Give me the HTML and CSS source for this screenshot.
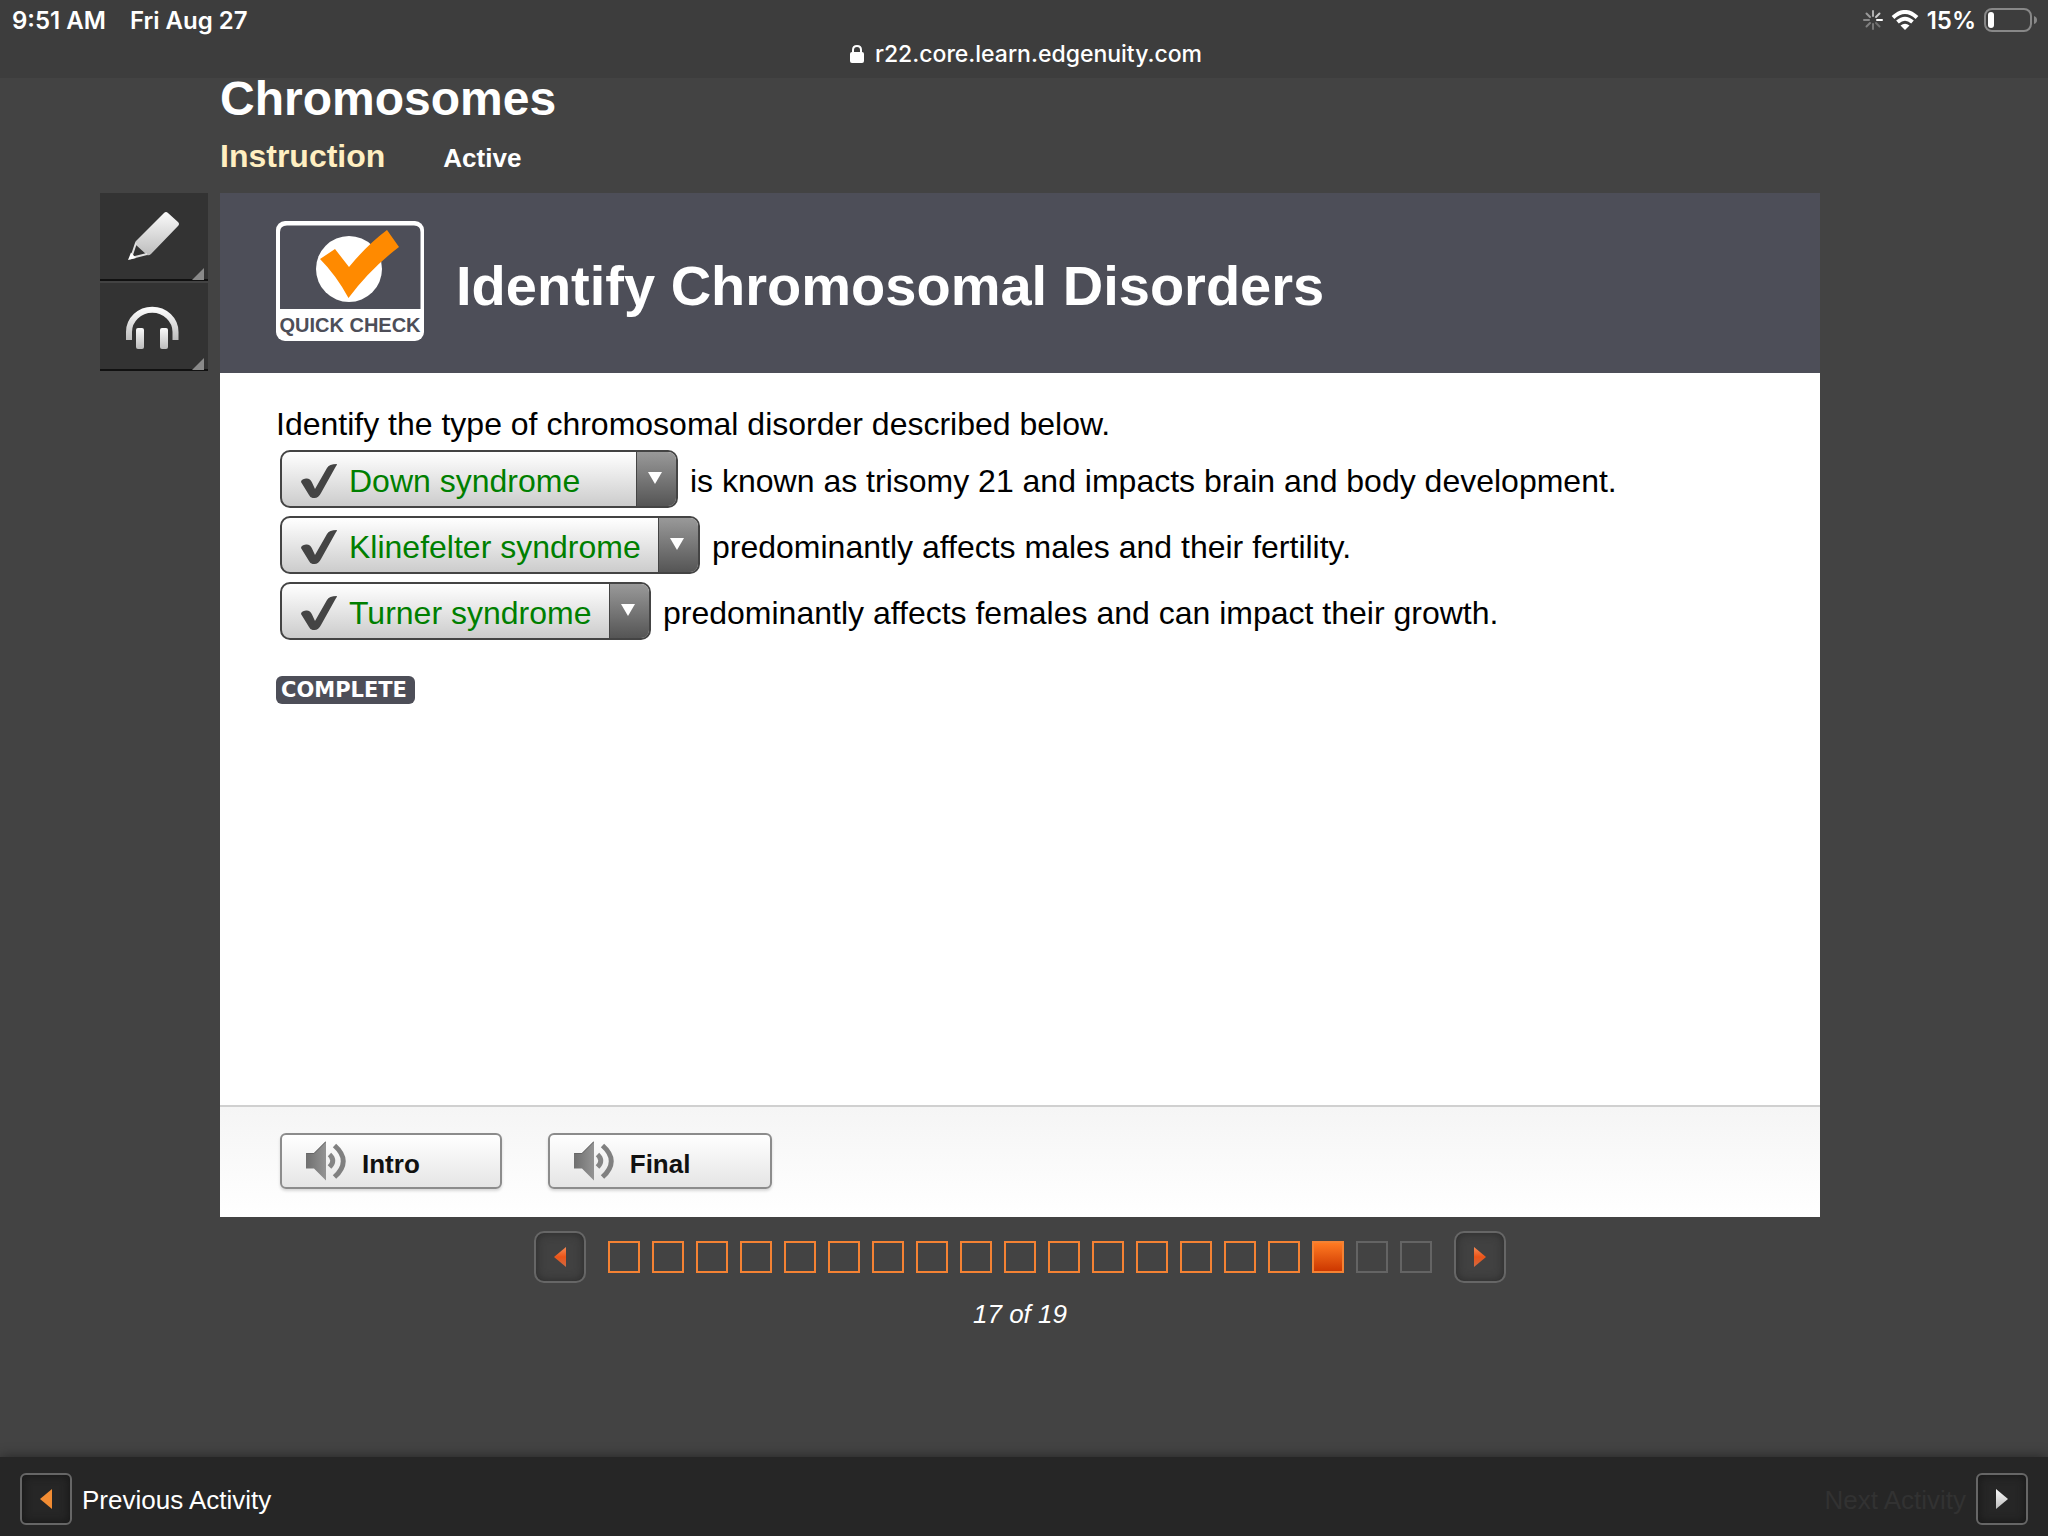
FILE: index.html
```html
<!DOCTYPE html>
<html lang="en">
<head>
    <meta charset="UTF-8">
    <title>Chromosomes</title>
    <link rel="stylesheet" href="styles.css">
</head>
<body>
    <!-- shared icon shapes -->
    <svg class="defs" width="0" height="0" aria-hidden="true">
        <defs>
            <linearGradient id="silver" x1="0" y1="0" x2="0" y2="1">
                <stop offset="0" stop-color="#fafafa"/>
                <stop offset="1" stop-color="#bdbdbd"/>
            </linearGradient>
            <linearGradient id="orange" x1="0" y1="0" x2="0" y2="1">
                <stop offset="0" stop-color="#f58a55"/>
                <stop offset="0.5" stop-color="#ea5418"/>
                <stop offset="1" stop-color="#cf6a45"/>
            </linearGradient>
            <linearGradient id="speakerFill" x1="0" y1="0" x2="1" y2="0">
                <stop offset="0" stop-color="#6f6f6f"/>
                <stop offset="1" stop-color="#949494"/>
            </linearGradient>
            <symbol id="check" viewBox="0 0 36 34">
                <path d="M0 18 Q0 15 5 14.500 Q9 14 11 18.500 L14 25 L26 4 Q28 0 36 0 Q36 1 34.500 3 L20 29 Q17.500 34 13.500 34 Q9.500 34.500 8 31 Z" fill="#444"/>
            </symbol>
            <symbol id="speaker" viewBox="0 0 40 40">
                <path d="M0 12 H8 L20 0 V39.500 L8 27.500 H0 Z" fill="url(#speakerFill)"/>
                <path d="M0.500 12.500 H8 L19.500 1" fill="none" stroke="#666"/>
                <path d="M23.500 13.500 Q30 19.500 23.500 26" fill="none" stroke="#858585" stroke-width="5"/>
                <path d="M28.500 4.500 Q46 20 28.500 36" fill="none" stroke="#808080" stroke-width="5"/>
            </symbol>
        </defs>
    </svg>

    <header class="browser-bar">
        <div class="status">
            <div class="status-group">
                <span>9:51 AM</span>
                <span>Fri Aug 27</span>
            </div>
            <div class="status-icons">
                <svg width="20" height="20" viewBox="0 0 20 20" stroke-width="2" stroke-linecap="round" aria-hidden="true">
                    <path d="M14 10H19" stroke="#fff"/>
                    <path d="M13 7L16.500 3.500" stroke="#c8c8c8"/>
                    <path d="M10 6V1" stroke="#b0b0b0"/>
                    <path d="M7 7L3.500 3.500" stroke="#999"/>
                    <path d="M6 10H1" stroke="#888"/>
                    <path d="M7 13L3.500 16.500" stroke="#808080"/>
                    <path d="M10 14V19" stroke="#777"/>
                    <path d="M13 13L16.500 16.500" stroke="#707070"/>
                </svg>
                <svg width="28" height="20" viewBox="0 0 28 20" fill="none" stroke="#fff" stroke-width="4" aria-hidden="true">
                    <path d="M2 7.500 Q14 -3.500 26 7.500"/>
                    <path d="M6.500 12 Q14 5.500 21.500 12"/>
                    <path d="M14 20 L9.500 15.500 Q14 12 18.500 15.500 Z" fill="#fff" stroke="none"/>
                </svg>
                <span>15%</span>
                <svg width="54" height="24" viewBox="0 0 54 24" aria-hidden="true">
                    <rect x="1" y="1" width="46" height="22" rx="7" fill="none" stroke="#888" stroke-width="2"/>
                    <rect x="4" y="4" width="6" height="16" rx="3" fill="#fff"/>
                    <path d="M50 8 Q53 9 53 12 Q53 15 50 16 Z" fill="#888"/>
                </svg>
            </div>
        </div>
        <div class="address">
            <svg width="14" height="18" viewBox="0 0 14 18" aria-hidden="true">
                <rect y="7" width="14" height="11" rx="2" fill="#fff"/>
                <path d="M3 8 V5 Q3 1 7 1 Q11 1 11 5 V8" fill="none" stroke="#fff" stroke-width="2"/>
            </svg>
            <span>r22.core.learn.edgenuity.com</span>
        </div>
    </header>

    <main class="lesson">
        <div class="lesson-head">
            <h1>Chromosomes</h1>
            <div class="lesson-meta">
                <span class="activity-type">Instruction</span>
                <span class="activity-state">Active</span>
            </div>
        </div>

        <div class="tools">
            <button class="tool" aria-label="Highlighter">
                <svg width="108" height="84" viewBox="0 0 108 84" aria-hidden="true">
                    <path d="M64 19 Q66 17 68 19 L78 28 Q80 30 78 32 L51 60 Q49 62 47 61 L36 51 Q34 49 36 47 Z" fill="url(#silver)"/>
                    <path d="M36 49 L31 64 L47 60" fill="none" stroke="#e0e0e0" stroke-width="2"/>
                    <path d="M28 66 L31 58.500 L36 64 Z" fill="#fff"/>
                    <path d="M104 74 V86 H92 Z" fill="#8a8a8a"/>
                </svg>
            </button>
            <button class="tool" aria-label="Read aloud">
                <svg width="108" height="84" viewBox="0 0 108 84" aria-hidden="true">
                    <path d="M29 56 V48 A23 22 0 0 1 75.500 48 V56" fill="none" stroke="url(#silver)" stroke-width="6"/>
                    <rect x="36" y="44" width="8" height="21" rx="2" fill="url(#silver)"/>
                    <rect x="60" y="44" width="8" height="21" rx="2" fill="url(#silver)"/>
                    <path d="M104 74 V86 H92 Z" fill="#8a8a8a"/>
                </svg>
            </button>
        </div>

        <section class="slide">
            <header class="slide-header">
                <svg width="148" height="120" viewBox="0 0 148 120" aria-hidden="true">
                    <rect width="148" height="120" rx="9" fill="#fff"/>
                    <path d="M4 88 V11 Q4 4.500 11 4.500 H138 Q144.500 4.500 144.500 11 V88 Z" fill="#4d4e58"/>
                    <circle cx="73" cy="48" r="33" fill="#fff"/>
                    <path d="M44 38 L59 28 L73 46 Q91 24 111 9 L123 26 Q94 48 72.500 77 Q60 54 44 38 Z" fill="#ff8a00"/>
                    <text class="badge-text" x="74" y="111" text-anchor="middle">QUICK CHECK</text>
                </svg>
                <h2>Identify Chromosomal Disorders</h2>
            </header>

            <form class="slide-body">
                <p>Identify the type of chromosomal disorder described below.</p>
                <div class="answer">
                    <div class="dropdown">
                        <select id="trisomy" class="wide">
                            <option>Down syndrome</option>
                        </select>
                        <svg class="dropdown-check" width="36" height="34"><use href="#check"/></svg>
                        <span class="dropdown-arrow"></span>
                    </div>
                    <label for="trisomy">is known as trisomy 21 and impacts brain and body development.</label>
                </div>
                <div class="answer">
                    <div class="dropdown">
                        <select id="males">
                            <option>Klinefelter syndrome</option>
                        </select>
                        <svg class="dropdown-check" width="36" height="34"><use href="#check"/></svg>
                        <span class="dropdown-arrow"></span>
                    </div>
                    <label for="males">predominantly affects males and their fertility.</label>
                </div>
                <div class="answer">
                    <div class="dropdown">
                        <select id="females">
                            <option>Turner syndrome</option>
                        </select>
                        <svg class="dropdown-check" width="36" height="34"><use href="#check"/></svg>
                        <span class="dropdown-arrow"></span>
                    </div>
                    <label for="females">predominantly affects females and can impact their growth.</label>
                </div>
                <span class="complete">COMPLETE</span>
            </form>

            <footer class="slide-footer">
                <button class="audio-btn">
                    <svg width="40" height="40" aria-hidden="true"><use href="#speaker"/></svg>
                    <span>Intro</span>
                </button>
                <button class="audio-btn">
                    <svg width="40" height="40" aria-hidden="true"><use href="#speaker"/></svg>
                    <span>Final</span>
                </button>
            </footer>
        </section>

        <nav class="pager">
            <div class="pager-row">
                <button class="arrow-btn" aria-label="Previous slide">
                    <svg width="12" height="20" viewBox="0 0 12 20"><path d="M12 0 V20 L0 10 Z" fill="url(#orange)"/></svg>
                </button>
                <div class="frames">
                    <a href="#1" class="frame" aria-label="1"></a>
                    <a href="#2" class="frame" aria-label="2"></a>
                    <a href="#3" class="frame" aria-label="3"></a>
                    <a href="#4" class="frame" aria-label="4"></a>
                    <a href="#5" class="frame" aria-label="5"></a>
                    <a href="#6" class="frame" aria-label="6"></a>
                    <a href="#7" class="frame" aria-label="7"></a>
                    <a href="#8" class="frame" aria-label="8"></a>
                    <a href="#9" class="frame" aria-label="9"></a>
                    <a href="#10" class="frame" aria-label="10"></a>
                    <a href="#11" class="frame" aria-label="11"></a>
                    <a href="#12" class="frame" aria-label="12"></a>
                    <a href="#13" class="frame" aria-label="13"></a>
                    <a href="#14" class="frame" aria-label="14"></a>
                    <a href="#15" class="frame" aria-label="15"></a>
                    <a href="#16" class="frame" aria-label="16"></a>
                    <a href="#17" class="frame current" aria-label="17"></a>
                    <a href="#18" class="frame locked" aria-label="18"></a>
                    <a href="#19" class="frame locked" aria-label="19"></a>
                </div>
                <button class="arrow-btn" aria-label="Next slide">
                    <svg width="12" height="20" viewBox="0 0 12 20"><path d="M0 0 V20 L12 10 Z" fill="url(#orange)"/></svg>
                </button>
            </div>
            <div class="pager-count">17 of 19</div>
        </nav>
    </main>

    <footer class="activity-bar">
        <button class="activity-btn">
            <span class="arrow-btn dark">
                <svg width="12" height="20" viewBox="0 0 12 20"><path d="M12 0 V20 L0 10 Z" fill="#f28c33"/></svg>
            </span>
            <span class="activity-label">Previous Activity</span>
        </button>
        <button class="activity-btn next">
            <span class="activity-label">Next Activity</span>
            <span class="arrow-btn dark">
                <svg width="12" height="20" viewBox="0 0 12 20"><path d="M0 0 V20 L12 10 Z" fill="url(#silver)"/></svg>
            </span>
        </button>
    </footer>
</body>
</html>
```
FILE: styles.css
```css
:root {
    --page: #434343;
    --slate: #4d4e58;
    --orange: #f58233;
}
* {
    margin: 0;
    padding: 0;
    box-sizing: border-box;
}
body {
    font-family: 'Liberation Sans', Arial, sans-serif;
    background: var(--page);
    color: white;
    min-height: 100vh;
    display: flex;
    flex-direction: column;
}
button {
    font-family: inherit;
    border: none;
    cursor: pointer;
}
svg {
    display: block;
    flex-shrink: 0;
}
.defs {
    position: absolute;
}

/* browser chrome */
.browser-bar {
    background: #3d3d3d;
    height: 78px;
    font-family: Inter, sans-serif;
}
.status {
    display: flex;
    justify-content: space-between;
    align-items: center;
    height: 40px;
    padding: 0 10px 0 12px;
    font-size: 24px;
    font-weight: 600;
}
.status-group {
    display: flex;
    gap: 24px;
}
.status-icons {
    display: flex;
    align-items: center;
    gap: 8px;
}
.address {
    display: flex;
    justify-content: center;
    align-items: center;
    gap: 11px;
    padding-left: 4px;
    font-size: 23px;
    line-height: 28px;
    font-weight: 500;
}

/* lesson */
.lesson {
    flex: 1;
    display: grid;
    grid-template-columns: 108px 1fr;
    grid-template-rows: auto 1fr auto;
    column-gap: 12px;
    padding: 0 228px 0 100px;
}
.lesson-head,
.slide,
.pager {
    grid-column: 2;
}
.lesson-head h1 {
    font-size: 48px;
    line-height: 42px;
}
.lesson-meta {
    display: flex;
    align-items: baseline;
    gap: 58px;
    margin: 18px 0 17px;
    font-weight: bold;
    line-height: 36px;
}
.activity-type {
    font-size: 32px;
    color: #ffefc1;
}
.activity-state {
    font-size: 26px;
}
.tools {
    display: flex;
    flex-direction: column;
    gap: 2px;
}
.tool {
    background: #333;
    height: 88px;
    border-bottom: 2px solid #111;
}
.tool svg {
    overflow: visible;
}

.slide {
    background: white;
    color: black;
    display: flex;
    flex-direction: column;
}
.slide-header {
    background: var(--slate);
    color: white;
    height: 180px;
    display: flex;
    align-items: center;
    gap: 32px;
    padding: 0 56px 4px;
}
.slide-header h2 {
    font-size: 56px;
    padding-top: 8px;
}
.badge-text {
    font-size: 20px;
    font-weight: bold;
    fill: var(--slate);
}
.slide-body {
    flex: 1;
    padding: 33px 56px;
    font-size: 32px;
    line-height: 36px;
}
.answer {
    display: flex;
    align-items: center;
    gap: 12px;
    margin: 8px 0 8px 4px;
}
.answer label {
    padding-top: 4px;
}
.dropdown {
    position: relative;
}
.dropdown select {
    appearance: none;
    display: block;
    height: 58px;
    padding: 4px 57px 0 67px;
    border: 2px solid #444;
    border-radius: 10px;
    background: linear-gradient(white, #ccc);
    color: #007f00;
    font-family: inherit;
    font-size: 32px;
}
.dropdown .wide {
    min-width: 398px;
}
.dropdown-check {
    position: absolute;
    left: 21px;
    top: 14px;
    pointer-events: none;
}
.dropdown-arrow {
    position: absolute;
    top: 2px;
    right: 2px;
    bottom: 2px;
    width: 40px;
    border-left: 1px solid #444;
    border-radius: 0 8px 8px 0;
    background: linear-gradient(#999, #555);
    pointer-events: none;
}
.dropdown-arrow::after {
    content: '';
    position: absolute;
    left: 11px;
    top: 20px;
    border: 7px solid transparent;
    border-top: 12px solid white;
    border-bottom: none;
}
.complete {
    display: inline-block;
    margin-top: 28px;
    padding: 0 8px 0 5px;
    border-radius: 6px;
    background: var(--slate);
    color: white;
    font: bold 21px/28px 'DejaVu Sans', sans-serif;
}
.slide-footer {
    display: flex;
    gap: 46px;
    padding: 26px 60px 28px;
    border-top: 2px solid #d0d0d0;
    background: linear-gradient(#f5f5f5, white);
}
.audio-btn {
    display: flex;
    align-items: center;
    gap: 16px;
    height: 56px;
    padding: 0 80px 0 24px;
    border: 2px solid #8c8c8c;
    border-radius: 6px;
    background: linear-gradient(white, #e5e5e5);
    box-shadow: 0 2px 3px rgba(0,0,0,0.15);
    color: #111;
    font-size: 26px;
    font-weight: bold;
}
.audio-btn span {
    padding-top: 6px;
}

/* frame navigation */
.pager {
    padding: 14px 0 128px;
}
.pager-row {
    display: flex;
    justify-content: center;
    align-items: center;
    gap: 22px;
}
.arrow-btn {
    width: 52px;
    height: 52px;
    display: flex;
    justify-content: center;
    align-items: center;
    border: 2px solid #666;
    border-radius: 10px;
    background: #414141;
    box-shadow: inset 0 0 10px #2a2a2a;
}
.arrow-btn.dark {
    border-radius: 6px;
    background: #262626;
    box-shadow: inset 0 0 10px #151515;
}
.frames {
    display: flex;
    gap: 12px;
}
.frame {
    width: 32px;
    height: 32px;
    border: 2px solid var(--orange);
}
.frame.current {
    background: linear-gradient(#ff7a22, #cc3700);
}
.frame.locked {
    border-color: #646464;
}
.pager-count {
    margin-top: 16px;
    text-align: center;
    font-size: 26px;
    font-style: italic;
    line-height: 30px;
}

.activity-bar {
    display: flex;
    justify-content: space-between;
    align-items: center;
    height: 79px;
    padding: 4px 20px 0;
    background: #262626;
    box-shadow: 0 0 12px rgba(0,0,0,0.45);
}
.activity-btn {
    display: flex;
    align-items: center;
    gap: 10px;
    background: none;
    color: white;
    font-size: 26px;
}
.activity-label {
    padding-top: 4px;
}
.activity-btn.next {
    color: #323232;
}
```
